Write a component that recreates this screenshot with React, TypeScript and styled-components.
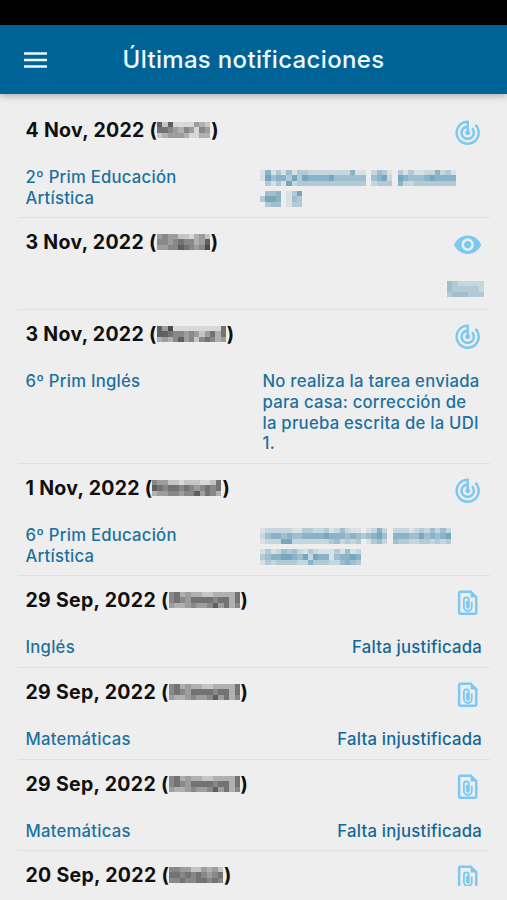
import React from 'react';
import styled, { createGlobalStyle } from 'styled-components';
import { MdTrackChanges, MdVisibility } from 'react-icons/md';

const GlobalStyle = createGlobalStyle`
  * { box-sizing: border-box; }
  html, body { margin: 0; padding: 0; background: #eeeeee; }
  body { font-family: Inter, "Liberation Sans", sans-serif; }
`;

const Screen = styled.div`
  display: flex;
  flex-direction: column;
  height: 900px;
  overflow: hidden;
  background: #eeeeee;
`;
const StatusBar = styled.div`
  flex: none;
  height: 25px;
  background: #000;
`;
const Header = styled.header`
  flex: none;
  display: grid;
  grid-template-columns: 70px 1fr 70px;
  align-items: center;
  height: 69px;
  background: #006397;
  box-shadow: 0 2px 7px rgba(0, 0, 0, 0.28);
`;
const MenuButton = styled.button`
  display: flex;
  padding: 0 0 0 24px;
  border: 0;
  background: none;
  color: #eefaff;
`;
const Title = styled.h1`
  margin: 0;
  text-align: center;
  font-size: 24px;
  line-height: 30px;
  font-weight: 500;
  letter-spacing: 0.33px;
  color: #eefaff;
`;
const List = styled.main`
  flex: none;
  height: 792px;
  padding: 12px 17px 0 18px;
  overflow: hidden;
`;
const Item = styled.article`
  height: ${(p: { $lines: number }) => 70.8 + p.$lines * 20.8}px;
  padding: 11px 7px 0 7.5px;
  border-bottom: 1.5px solid #e0e1e2;
`;
const ItemHead = styled.div`
  display: flex;
  justify-content: space-between;
  height: 50px;
`;
const DateLine = styled.h2`
  display: flex;
  align-items: center;
  height: 26px;
  margin: 0;
  font-size: 19.5px;
  line-height: 26px;
  font-weight: 700;
  letter-spacing: 0.31px;
  white-space: pre;
  color: #101010;
`;
const IconSlot = styled.span`
  display: flex;
  width: 29.4px;
  height: 29.4px;
  margin: 1px 1px 0 0;
  color: #7bc8f3;
`;
const Detail = styled.div`
  display: grid;
  grid-template-columns: 237px 1fr;
  font-size: 16.7px;
  line-height: 20.8px;
  font-weight: 500;
  letter-spacing: 0.24px;
  white-space: pre-line;
  color: #1d719f;
`;
const Subject = styled.div``;
const Message = styled.div<{ $end?: boolean }>`
  display: flex;
  flex-direction: column;
  align-items: ${(p) => (p.$end ? 'flex-end' : 'flex-start')};
  margin-right: ${(p) => (p.$end ? '1px' : '-6px')};
  white-space: pre;
  color: ${(p) => (p.$end ? '#146797' : 'inherit')};
`;
const Redacted = styled.svg`
  flex: none;
  display: block;
`;
const NameMask = styled.span`
  display: flex;
  margin: 0 1px 0 0;
`;
const RedactedLine = styled.div<{ $end?: boolean }>`
  display: flex;
  align-items: center;
  height: 20.8px;
  margin: ${(p) => (p.$end ? '-0.6px -2px 0.6px' : '0.7px 0 -0.7px')} -2.5px;
`;

/* Each digit is the opacity of one mosaic cell; a space leaves it empty. */
function Mosaic({ rows, color, width }: { rows: string[]; color: string; width: number }) {
  const cols = Math.max(...rows.map((r) => r.length));
  return (
    <Redacted width={width} height={16} viewBox={`0 0 ${cols} 3`} preserveAspectRatio="none" shapeRendering="crispEdges" aria-hidden>
      {rows.flatMap((row, y) =>
        [...row].map((v, x) =>
          v === ' ' ? null : <rect key={`${x}-${y}`} x={x} y={y} width={1} height={1} fill={color} opacity={Number(v) / 10} />
        )
      )}
    </Redacted>
  );
}

function FileClipIcon() {
  return (
    <svg width="100%" height="100%" viewBox="0 0 24 24" fill="none" stroke="currentColor" aria-hidden>
      <path d="M14.5 3H6a1 1 0 0 0-1 1v16a1 1 0 0 0 1 1h12a1 1 0 0 0 1-1V7.5z" strokeWidth="2" />
      <path d="M14.4 2.6v5.2h5.2z" fill="currentColor" stroke="none" />
      <path d="M15.3 11v4.6a3.2 3.2 0 0 1-6.4 0V9.7a2 2 0 0 1 4 0v5.7a.75.75 0 0 1-1.5 0V10.5" strokeWidth="1.5" />
    </svg>
  );
}

type Mask = { rows: string[]; width: number };
type IconKind = 'track' | 'eye' | 'file';
type Notification = {
  date: string;
  name: Mask;
  icon: IconKind;
  subject: string;
  message?: string;
  hidden?: Mask[];
  end?: boolean;
  lines: number;
};

const maria: Mask = { width: 53, rows: ['7271111432', '6654354154', '2344431133'] };
const mariaSoft: Mask = { width: 53, rows: ['4544221342', '5545655347', '4455765458'] };
const manuel: Mask = { width: 69, rows: ['7481111111116', '7765545424636', '3435745256534'] };
const manuelSoft: Mask = { width: 69, rows: ['5442212221126', '7656656545656', '3445545574653'] };
const manuelGray: Mask = { width: 71, rows: ['5634332233336', '5654666656636', '4334544574635'] };
const mariaGray: Mask = { width: 54, rows: ['5544224342', '6656565456', '5565566565'] };

const notifications: Notification[] = [
  {
    date: '4 Nov, 2022', name: maria, icon: 'track', subject: '2º Prim Educación\nArtística', lines: 2,
    hidden: [
      {
        width: 196,
        rows: [
          '15131413322222222511 2431 31311225231',
          '16455363655556444444 4562 65444565555',
          '03131623333333333333 2333 52233333333',
        ],
      },
      { width: 42, rows: ['0445 136', '3665 143', '0344 133'] },
    ],
  },
  { date: '3 Nov, 2022', name: mariaSoft, icon: 'eye', subject: '', lines: 1, end: true, hidden: [{ width: 37, rows: ['4322222', '4333332', '3444333'] }] },
  {
    date: '3 Nov, 2022', name: manuel, icon: 'track', subject: '6º Prim Inglés', lines: 4,
    message: 'No realiza la tarea enviada\npara casa: corrección de\nla prueba escrita de la UDI\n1.',
  },
  {
    date: '1 Nov, 2022', name: manuelSoft, icon: 'track', subject: '6º Prim Educación\nArtística', lines: 2,
    hidden: [
      {
        width: 191,
        rows: [
          '122222113322312421101252 22212324242',
          '245545445555655545434564 55544645456',
          '122266222222234232301342 43322332323',
        ],
      },
      { width: 101, rows: ['1312434213211131412', '3455665462655145565', '1323333225333224543'] },
    ],
  },
  { date: '29 Sep, 2022', name: manuelGray, icon: 'file', subject: 'Inglés', message: 'Falta justificada', lines: 1, end: true },
  { date: '29 Sep, 2022', name: manuelGray, icon: 'file', subject: 'Matemáticas', message: 'Falta injustificada', lines: 1, end: true },
  { date: '29 Sep, 2022', name: manuelGray, icon: 'file', subject: 'Matemáticas', message: 'Falta injustificada', lines: 1, end: true },
  { date: '20 Sep, 2022', name: mariaGray, icon: 'file', subject: '', lines: 1 },
];

function NotificationIcon({ kind }: { kind: IconKind }) {
  if (kind === 'file') return <FileClipIcon />;
  return kind === 'eye' ? <MdVisibility size="100%" /> : <MdTrackChanges size="100%" />;
}

function NotificationItem({ item }: { item: Notification }) {
  return (
    <Item $lines={item.lines}>
      <ItemHead>
        <DateLine>
          {item.date} (<NameMask><Mosaic {...item.name} color="#222222" /></NameMask>)
        </DateLine>
        <IconSlot><NotificationIcon kind={item.icon} /></IconSlot>
      </ItemHead>
      <Detail>
        <Subject>{item.subject}</Subject>
        <Message $end={item.end}>
          {item.message}
          {item.hidden?.map((mask, i) => (
            <RedactedLine key={i} $end={item.end}><Mosaic {...mask} color="#28789f" /></RedactedLine>
          ))}
        </Message>
      </Detail>
    </Item>
  );
}

export default function App() {
  return (
    <>
      <GlobalStyle />
      <Screen>
        <StatusBar />
        <Header>
          <MenuButton aria-label="Menú">
            <svg width="23" height="16" viewBox="0 0 23 16" fill="none" stroke="currentColor" strokeWidth="2.5">
              <path d="M0 1.6h23M0 8h23M0 14.4h23" />
            </svg>
          </MenuButton>
          <Title>Últimas notificaciones</Title>
        </Header>
        <List>
          {notifications.map((item, i) => <NotificationItem key={i} item={item} />)}
        </List>
      </Screen>
    </>
  );
}
